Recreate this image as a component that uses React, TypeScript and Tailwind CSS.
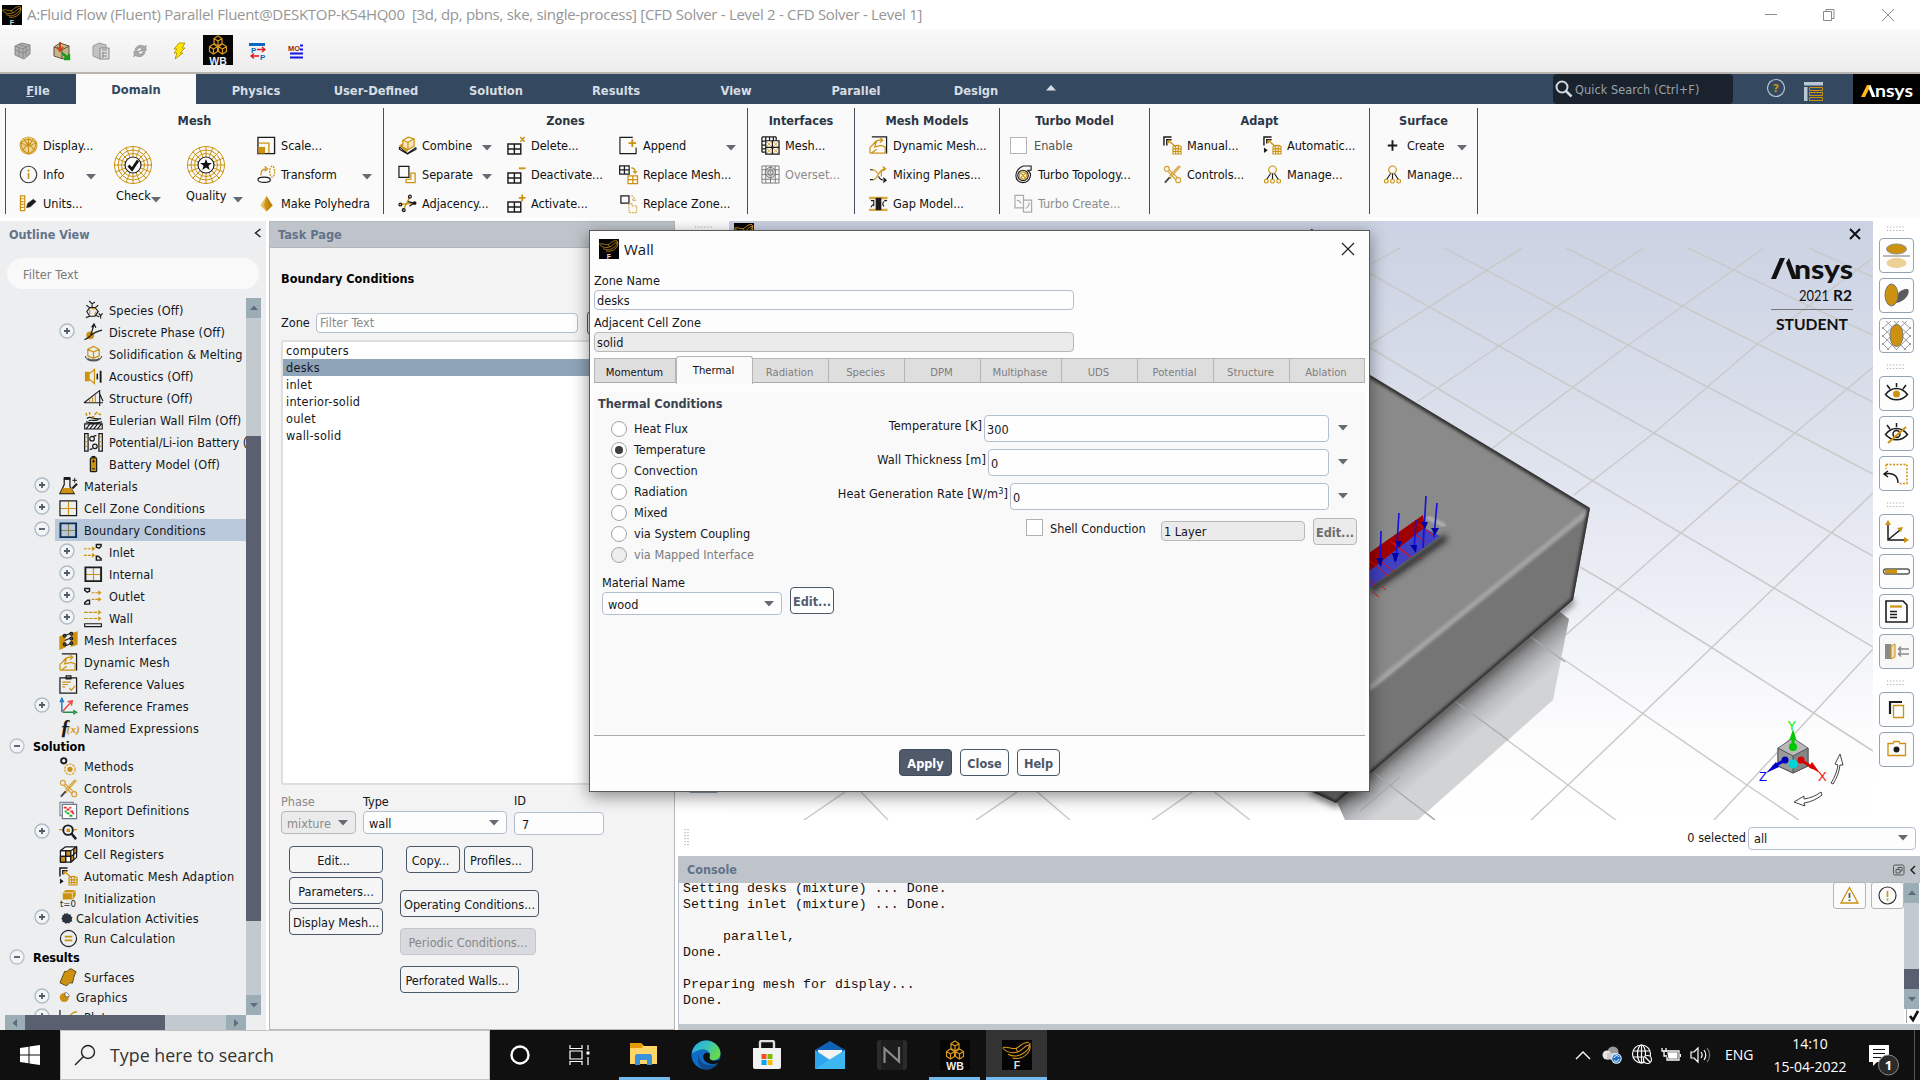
import React from "react";

const G = "#cc920f";
const K = "#1b1b1b";

const icons: Record<string, React.ReactNode> = {
  display: (
    <g fill="none" stroke={G} strokeWidth="1.1">
      <circle cx="10" cy="10" r="9" fill="#ecd39a" stroke="#d9a93f" />
      <path d="M1.5 7L10 3l8.500 4L16 15l-6 4-6-4zM10 3v16M4 15L10 7l6 8M1.500 7L10 11l8.500-4M5 3l5 8 5-8" stroke="#c98f12" />
    </g>
  ),
  info: (
    <g fill="none" stroke="#3a3a3a" strokeWidth="1.200">
      <circle cx="10" cy="10" r="8.700" />
      <path d="M10 8.500v6" stroke={G} strokeWidth="1.800" />
      <circle cx="10" cy="6" r=".6" fill={G} stroke={G} />
    </g>
  ),
  units: (
    <g fill="none" strokeWidth="1.300">
      <path d="M1.500 2h4.500v15.500H1.500zM2 5h3M2 8h3M2 11h3M2 14h3" stroke={G} />
      <path d="M8 14.500l1-4.500 6-4.500 3 2.500-6 5.500z" fill={K} stroke={K} strokeWidth=".5" />
    </g>
  ),
  scale: (
    <g fill="none" strokeWidth="1.400">
      <path d="M1 1.500h17.500v17H1z" stroke={K} />
      <path d="M1.500 7.500h11V18" stroke={G} />
      <path d="M1.500 11.500h7v7h-7z" fill={G} />
    </g>
  ),
  transform: (
    <g fill="none" strokeWidth="1.300">
      <ellipse cx="7.500" cy="15.500" rx="6.500" ry="2.800" stroke={K} />
      <path d="M4 11C4 6 6 4 9.500 4M8 1.500l3 2.500-3 2.500" stroke={G} />
      <ellipse cx="16" cy="7" rx="2.600" ry="5.800" stroke={G} strokeDasharray="2 1" />
    </g>
  ),
  poly: (
    <g>
      <path d="M10 2L3.500 12 10 18.500z" fill="#e6bd60" />
      <path d="M10 2l6.500 10L10 18.500z" fill="#b97f06" />
      <path d="M10 2L7.500 12 10 18.500 12.500 12z" fill={G} />
    </g>
  ),
  combine: (
    <g fill="none" strokeWidth="1.200" strokeLinejoin="round">
      <path d="M1.500 11.500L10 18.500l9-6.500M1.500 11.500V14l8.500 5 9-5v-2" stroke={K} />
      <path d="M5 4.500L11 1l6 2v7.500l-6.500 4L5 11.500zM5 4.500l5.500 2 6.500-3.500M10.500 6.500v8" fill="#f7e5bd" stroke={G} />
      <path d="M1 10l4-2v4l5.500 3-1 2z" fill={G} />
    </g>
  ),
  separate: (
    <g fill="none" strokeWidth="1.300">
      <path d="M1 1.500h10.500v11.500H1z" stroke={K} />
      <path d="M13.500 8.500h4.500v10H8.500v-3.500h5z" stroke={G} />
    </g>
  ),
  adjacency: (
    <g fill="none" strokeWidth="1.300">
      <path d="M2.500 11L17 9.500M12.500 3L5 18M4 11l10-1" stroke={G} />
      <path d="M10.500 8L17 9.500l-5 3.500" stroke={K} />
      <circle cx="12.500" cy="2.800" r="1.500" stroke={K} />
      <circle cx="2.500" cy="11" r="1.500" stroke={K} />
      <circle cx="6" cy="17" r="1.500" stroke={K} />
      <circle cx="17.500" cy="9.500" r="2" fill={K} />
    </g>
  ),
  del: (
    <g fill="none" strokeWidth="1.500">
      <path d="M1 8.500h13.500v10.500H1zM7.750 8.500V19M1 13.750h13.500" stroke={K} />
      <path d="M14 1l4.500 5M18.500 1L14 6" stroke={G} />
    </g>
  ),
  deact: (
    <g fill="none" strokeWidth="1.500">
      <path d="M1 8.500h13.500v10.500H1zM7.750 8.500V19M1 13.750h13.500" stroke={K} />
      <path d="M12.500 3.500h7" stroke={G} strokeWidth="2" />
    </g>
  ),
  act: (
    <g fill="none" strokeWidth="1.500">
      <path d="M1 8.500h13.500v10.500H1zM7.750 8.500V19M1 13.750h13.500" stroke={K} />
      <path d="M12.500 4h7M16 .5v7" stroke={G} strokeWidth="1.800" />
    </g>
  ),
  append: (
    <g fill="none" strokeWidth="1.200">
      <path d="M14.500 1.500H1v17h17V12" stroke={K} />
      <path d="M10 7.500h8M14 3.500v8" stroke={G} strokeWidth="2" />
    </g>
  ),
  repmesh: (
    <g fill="none" strokeWidth="1.300">
      <path d="M.7 1h10v8.500H.7zM5.700 1v8.500M.7 5.200h10" stroke={K} />
      <path d="M9.500 11.500h10v8h-10zM14.500 11.500v8M9.500 15.500h10M13 3c3 0 4 1.500 4 5M15 6.500l2 2 2-2" stroke={G} />
    </g>
  ),
  repzone: (
    <g fill="none" strokeWidth="1.300">
      <path d="M2 2h8.500v7.500H2z" stroke={K} />
      <path d="M10.500 9.500h3v3h5v7h-8zM13 2c2 0 3 1.500 3 5M14 5.500l2 2 2-2" stroke="#d9ad4b" strokeDasharray="2 1" />
    </g>
  ),
  imesh: (
    <g fill="none" strokeWidth="1.300">
      <path d="M1 1h15M1 1v16M1 5.500h4M1 9.500h4M1 13.500h4M1 17h4M5 1v4M9 1v4M13 1v4M16 1v4" stroke={K} />
      <path d="M5 5l14 14M19 5L5 19M12 5l7 7-7 7-7-7z" stroke="#dba93c" strokeWidth="1" />
      <path d="M5 5h14v14H5zM12 5v14M5 12h14" stroke={K} />
    </g>
  ),
  overset: (
    <g fill="none" stroke="#777" strokeWidth="1">
      <path d="M1 1h18v18H1zM5 1v18M10 1v18M15 1v18M1 5h18M1 10h18M1 15h18" />
      <circle cx="10" cy="8" r="5.500" fill="#bbb" fillOpacity=".7" />
      <circle cx="10" cy="8" r="2.800" />
    </g>
  ),
  dynmesh: (
    <g fill="none" strokeWidth="1.300">
      <path d="M3 1h15.500v17.500" stroke={K} />
      <path d="M1 12L8 5.500l-2 6 7-1.500 4 1.500v6.500H2.500L8 14M4 9.500C6 5 9 4 14 4.500M11.500 2l3 2.500-3 2.500M1 12v6" stroke={G} />
    </g>
  ),
  mixing: (
    <g fill="none" strokeWidth="1.300">
      <path d="M1 5h3.500M1 15.500h3.500M10 12c1 3 3 4 7 4M15 13.500l3 2.500-3 2.500" stroke={K} />
      <path d="M3 5c4 0 5 2 6 4M4.500 15.500c5 0 5-11 12-11.500M14.500 1.500l3 2.500-3 2.500M13 6v6" stroke={G} />
    </g>
  ),
  gap: (
    <g>
      <path d="M0 3h19.500v2.500H0zM0 15.500h19.500V18H0z" fill="#d9a93f" />
      <path d="M7 4h6v13H7z" fill={K} />
      <path d="M2 7h3v6M16 7h3M16 13c-2-1-2-4 0-5M4 11l-2 3" fill="none" stroke={K} strokeWidth="1.200" />
    </g>
  ),
  turbo: (
    <g fill="none" stroke={K} strokeWidth="1.200">
      <path d="M18 1v4.500h-4c3 1.500 4 4 3 7-1 4-4 6-8 6-4 0-7-3-7-7.500C2 6 6 2 10 1z" />
      <circle cx="9.500" cy="11" r="5.500" />
      <circle cx="9.500" cy="11" r="3.800" stroke={G} />
      <path d="M7 8.500l5 5M12 8.500l-5 5" stroke={G} />
    </g>
  ),
  turboc: (
    <g fill="none" stroke="#aaa" strokeWidth="1.300">
      <path d="M1 1.500h9v13H1zM10 6.500h8.500v12.500H10V6.500M3 7c2-1 3 0 4.500 3M12 15c2 0 4-3 4-6" />
    </g>
  ),
  adapt: (
    <g fill="none" strokeWidth="1.500">
      <path d="M9 1H1v9M9 4H4v6" stroke={K} />
      <path d="M6 5l7 6M7.500 4.500L5.500 5l0 2.500" stroke={G} />
      <path d="M10.500 11.500c2-2 5-2 8.500-.5v8h-8.500zM13.300 10v9M16 10v9M10.500 13.500H19M10.500 16.300H19" stroke={G} strokeWidth="1.200" />
    </g>
  ),
  adaptauto: (
    <g fill="none" strokeWidth="1.500">
      <path d="M9 1H1v9M9 4H4v4" stroke={K} />
      <path d="M1 12l4 3-4 3z" fill={K} />
      <path d="M6 5l7 6M7.500 4.500L5.500 5l0 2.500" stroke={G} />
      <path d="M10.500 11.500c2-2 5-2 8.500-.5v8h-8.500zM13.300 10v9M16 10v9M10.500 13.500H19M10.500 16.300H19" stroke={G} strokeWidth="1.200" />
    </g>
  ),
  controls: (
    <g fill="none" strokeWidth="1.300" stroke="#d6a336">
      <circle cx="4" cy="4" r="2.600" />
      <circle cx="16" cy="16" r="2.600" />
      <path d="M5.500 7l8 8.500M7 5.500l8.500 8M18.500 1.500L8 13M17 .8L7 11.500M6.500 12.500l2 2" />
      <path d="M7 13l-5 5.500" stroke="#444" strokeWidth="2" />
    </g>
  ),
  manage: (
    <g fill="none" strokeWidth="1.200" stroke={G}>
      <circle cx="10" cy="5" r="4" />
      <path d="M8 9L4 15M10 9v6M12 9l4 6" stroke={K} />
      <circle cx="3.500" cy="17" r="2" />
      <circle cx="10" cy="17" r="2" />
      <circle cx="16.500" cy="17" r="2" />
    </g>
  ),
  plus: <path d="M10 4.500v11M5 10h10" stroke={K} strokeWidth="2" />,
  species: (
    <g fill="none" strokeWidth="1.200" stroke={K}>
      <path d="M6 7h5.500l3.500 4-3.500 5H6l-3-5zM6 7L2.500 4.500M8.500 7V3M5.500 0L8.500 3l3-2M12 7l3-2.500M6 16l-4 1.500M12 15l4 1.500M15.500 13l2 2.500 2-2.500M17.500 15v3.500" />
      <path d="M6 9v5M8 8h4M11 14l2-3" stroke={G} />
    </g>
  ),
  discrete: (
    <g fill="none" strokeWidth="1.300" stroke={K}>
      <circle cx="6.500" cy="13" r="3.500" fill={G} stroke={G} />
      <path d="M.5 17.500C6 16 7 10 19 7.500M7 13l3.500-11M8 4.500L10.500 1l2 4" />
    </g>
  ),
  solid: (
    <g fill="none" strokeWidth="1.300">
      <path d="M4 4.500L10 1.500l6 3v7L10 14l-6-2.500zM4 4.500l6 3 6-3M10 7.500V14" stroke={G} />
      <path d="M1.500 11.500c0 7 17 7 17 0M4 13.500c1 3 11 3 12 0" stroke="#555" />
    </g>
  ),
  acoustic: (
    <g fill="none" strokeWidth="1.300">
      <path d="M1 5h5v10H1z" fill={G} />
      <path d="M6 7l5-4.500v15L6 13" stroke={G} />
      <path d="M14 7v6" stroke={K} strokeWidth="1.600" />
      <path d="M17.500 4v12.500" stroke={K} strokeWidth="2" />
    </g>
  ),
  structure: (
    <g fill="none" strokeWidth="1.200" stroke={K}>
      <path d="M0 14.500L16 2M0 14.500h20M16.500 1v17M16 4l4 9" />
      <path d="M6 11v3M9 9v5M12 6v8" stroke={G} />
    </g>
  ),
  film: (
    <g fill="none" strokeWidth="1.200" stroke={K}>
      <path d="M.7 13.500h18.500v5.500H.7zM2 19l4-5M6 19l4-5M10 19l4-5M14 19l4-5M2 11.500c5 1 13 1 17 0M3 8c4-4 6 2 15 0M5 10c4-1 8 1 10-1" />
      <path d="M2 2l1 3M6 1v3M11 4l3-3M15 3l3 1M8 6h3" stroke={G} strokeWidth="1.600" />
    </g>
  ),
  potential: (
    <g fill="none" strokeWidth="1.300" stroke={K}>
      <path d="M.7.700h3.600v18.500H.7zM15.700.700h3.600v18.500h-3.600z" />
      <path d="M1.500 4h2M1.500 9h2M1.500 14h2M16.500 4h2M16.500 9h2M16.500 14h2" stroke={G} />
      <circle cx="8.500" cy="6" r="2.400" />
      <circle cx="11.500" cy="14" r="2.400" />
      <path d="M10 3.500l3-1M9 16.500l-3 1" />
    </g>
  ),
  battery: (
    <g>
      <path d="M8 1h4v2H8z" fill={K} />
      <rect x="6.700" y="3" width="6.600" height="14.500" rx="1" fill={G} stroke={K} strokeWidth="1.300" />
      <path d="M8.500 6.500h3M10 5v3M8.500 14.500h3" stroke={K} strokeWidth="1" />
    </g>
  ),
  materials: (
    <g fill="none" strokeWidth="1.300" stroke={K}>
      <path d="M5.500 2v6L1 17.500h15L11.500 10V2z" fill="#eee" />
      <path d="M4 11.500h9l2.500 5.500h-14z" fill={G} stroke="none" />
      <path d="M5 1.500h7" strokeWidth="3" />
      <path d="M14 3.500h5M16.500 1v5" strokeWidth="1" />
      <path d="M19 7l-5 5" strokeWidth="2.200" />
    </g>
  ),
  cell: (
    <g fill="none" strokeWidth="1.200">
      <path d="M10 2.500v15M1.500 10h17" stroke={G} />
      <path d="M1 2h17.500v15.500H1z" stroke={K} strokeWidth="1.300" />
    </g>
  ),
  boundary: (
    <g fill="none" strokeWidth="1.200">
      <path d="M10 2.500v15M1.500 10h17" stroke="#8a8a50" />
      <path d="M1.500 2.500h16.500v14.500H1.500z" stroke="#0d2f55" strokeWidth="2" />
    </g>
  ),
  internal: (
    <g fill="none" strokeWidth="1.200">
      <path d="M10 3v14M2 10h16" stroke={G} />
      <path d="M1.500 2.500h16.500v14.500H1.500z" stroke={K} strokeWidth="2" />
    </g>
  ),
  inlet: (
    <g fill="none" strokeWidth="1.200">
      <path d="M0 6h9M0 13h9" stroke={G} strokeDasharray="3 1" />
      <path d="M8.500 3.500L12 6 8.500 8.500zM8.500 10.500L12 13l-3.500 2.500z" fill={G} />
      <path d="M18 1.500h-5v3l3 1 2-2zM13 18v-4h2l3 2.500V18z" stroke={K} strokeWidth="1.500" />
    </g>
  ),
  outlet: (
    <g fill="none" strokeWidth="1.200">
      <path d="M8 6h8M8 13h8" stroke={G} strokeDasharray="3 1" />
      <path d="M15 3.500L18.500 6 15 8.500zM15 10.500l3.500 2.500-3.500 2.500z" fill={G} />
      <path d="M.8 1.500h5v3l-2.500 1-2.500-2zM5.800 18v-4h-2l-3 2.500V18z" stroke={K} strokeWidth="1.500" />
    </g>
  ),
  wall: (
    <g fill="none" strokeWidth="1.200">
      <path d="M0 3.500h15M0 10h15" stroke={G} strokeDasharray="4 1" />
      <path d="M15 1L18.500 3.500 15 6zM15 7.500L18.500 10 15 12.500z" fill={G} />
      <path d="M.7 15.500h17.600v3H.7z" stroke={K} />
    </g>
  ),
  minterf: (
    <g strokeWidth="1.200" stroke={K}>
      <path d="M1 6l5-2v13l-5 2zM13 3l6-2v13l-6 2z" fill={G} stroke={G} />
      <path d="M6 5l7-3M6 16l7-3M6 10l7-3" fill="none" />
      <circle cx="6" cy="5" r="1.500" fill="#555" />
      <circle cx="6" cy="14" r="1.500" fill="#555" />
      <circle cx="13" cy="3" r="1.500" fill="#555" />
      <circle cx="13" cy="13" r="1.500" fill="#555" />
      <circle cx="13" cy="8" r="1.500" fill="#555" />
    </g>
  ),
  refval: (
    <g fill="none" strokeWidth="1.300" stroke={K}>
      <path d="M1 3h17.500v16H1zM7.500 1h5v3h-5z" />
      <path d="M3.500 7.500h9M3.500 10h6M3.500 12.500h3M11 14l2 2 4-4.500" stroke={G} />
    </g>
  ),
  frames: (
    <g fill="none" strokeWidth="1.500">
      <path d="M3 16V4M1 5.500L3 1.500l2 4" stroke="#1976c5" />
      <path d="M4 16h12M15 14l3.500 2-3.500 2" stroke="#1b9146" />
      <path d="M4 15l9-10M9 5l5-1-1 5" stroke="#e8493c" />
    </g>
  ),
  methods: (
    <g fill="none">
      <circle cx="5" cy="4" r="2.800" stroke={K} strokeWidth="2" />
      <circle cx="11.500" cy="13" r="5.500" stroke="#dcae49" strokeWidth="1.600" strokeDasharray="2.500 1" />
      <circle cx="11.500" cy="13" r="2.800" fill={G} />
    </g>
  ),
  report: (
    <g fill="none" strokeWidth="1.200">
      <path d="M1 1.500h14v14H1z" stroke="#7d8894" />
      <path d="M3.500 3.500h15v15h-15z" fill="#fff" stroke="#6b7784" />
      <path d="M5 7h3M8 9h3M11 7h2M12 11h3M14 13h2" stroke="#e22" strokeWidth="2" />
      <path d="M6 11h2M8 13h3M11 15.500h3" stroke="#1a1" strokeWidth="2" />
    </g>
  ),
  monitors: (
    <g fill="none">
      <path d="M0 7h4M15 7h4" stroke={G} strokeWidth="1.300" />
      <circle cx="9.500" cy="7.500" r="5" stroke={K} strokeWidth="2" />
      <path d="M8 6h3.500v3.500H8z" fill={G} />
      <path d="M13 11l5 6" stroke={K} strokeWidth="2.600" />
    </g>
  ),
  registers: (
    <g strokeWidth="1.300" stroke={K} strokeLinejoin="round">
      <path d="M1.500 6h11v12h-11z" fill="#fff" />
      <path d="M7 6h5.500v6H7zM1.500 12H7v6H1.500z" fill={G} />
      <path d="M1.500 6l5-4h12l-6 4zM12.500 6l6-4v11l-6 5z" fill="#fff" />
      <path d="M15.500 4l3-2v5.500l-3 2.500zM12.500 12l3-2v5.500l-3 2.500z" fill={G} />
      <path d="M7 6v12M1.500 12h11" fill="none" />
    </g>
  ),
  init: (
    <g>
      <path d="M4 4l3-3h10.500v6l-3 4H4z" fill={G} />
      <path d="M4 4h10v6M14 4l3.500-3" stroke="#f3dfb0" fill="none" />
      <text x="1" y="19" fontSize="9" fontFamily="DejaVu Sans" fill={K}>t=0</text>
    </g>
  ),
  calc: <path d="M7 3l2 1 2-1.500 2 2 2.500 0 .5 2.500 2 1.500-1 2.500 .5 2.500-2.500 1-1.500 2-2.500-.5-2.500 1-1.500-2-2.500-.5 0-2.500L3 10l1.500-2L4.500 5.500 6.500 5z" fill="#2b333e" />,
  run: (
    <g fill="none">
      <circle cx="10" cy="10" r="8.500" stroke={K} strokeWidth="1.200" />
      <path d="M6 8h8M6 12h8" stroke={G} strokeWidth="1.800" />
    </g>
  ),
  surfaces: <path d="M1 15.500L6 3.500C10 5 9 .5 13 1l5 3c-3 5-2 7-4 12-4-2-4 3-7 2.500z" fill={G} stroke="#5d4715" strokeWidth="1" />,
  graphics: (
    <g>
      <circle cx="7" cy="10" r="6" fill={G} />
      <path d="M8 3.500h2l3.500 3.500V9H8z" fill="#fff" stroke="#555" />
    </g>
  ),
  plots: (
    <g fill="none">
      <path d="M1 2v17h18" stroke={K} strokeWidth="1.300" />
      <path d="M9 15c2 0 0-11 10-11" stroke={G} strokeWidth="1.300" />
    </g>
  ),
};

const Ic = ({ n, s = 20 }: { n: string; s?: number }) => (
  <svg width={s} height={s} viewBox="0 0 20 20" className="shrink-0 overflow-visible">
    {n === "named" ? (
      <g fontFamily="Liberation Serif" fontStyle="italic">
        <text x="1" y="16" fontSize="22" fontWeight="bold" fill={K}>ƒ</text>
        <text x="8" y="15" fontSize="12" fontWeight="bold" fill={G}>(x)</text>
      </g>
    ) : (
      icons[n]
    )}
  </svg>
);

const Down = ({ className = "", color = "#666b73" }: { className?: string; color?: string }) => (
  <svg width="10" height="6" viewBox="0 0 10 6" className={"shrink-0 " + className}>
    <path d="M0 0h10L5 5.500z" fill={color} />
  </svg>
);

const fluentStrokes = "M.5 5C4 4 7 6.500 9.500 5.500S13 1.500 18 1.500M.5 5.500C4 9 7 9 10.500 8s3.500-4 8-5M4 9.500c4 2 7 1.500 10-.5s4-3 4.500-6M7 12c4 1 8-.5 10-3s2-4 1.500-7M9.500 5.500c0 2 1.500 2.500 1 2.500";

const FluentLogo = ({ size, h }: { size: number; h?: number }) => (
  <svg width={size} height={h ?? size} viewBox="0 0 20 20" preserveAspectRatio="none" className="shrink-0">
    <rect width="20" height="20" fill="#050505" />
    <path d={fluentStrokes} stroke="#d9981c" strokeWidth=".7" fill="none" />
    <text x="10" y="19.500" fontSize="7" fontWeight="bold" fontFamily="Liberation Sans" fill="#ddd" textAnchor="middle">F</text>
  </svg>
);

const WbLogo = ({ w }: { w: number }) => (
  <svg width={w} height="30" viewBox="0 0 30 30" preserveAspectRatio="none" className="shrink-0">
    <rect width="30" height="30" fill="#050505" />
    <g fill="none" stroke="#d9981c" strokeWidth="1.200">
      <path d="M15 1l4 2.500v5L15 11l-4-2.500v-5zM15 6l4-2.500M15 6l-4-2.500M15 6v5" />
      <path d="M10.500 9l4 2.500v5l-4 2.500-4-2.500v-5zM10.500 14l4-2.500M10.500 14l-4-2.500M10.500 14v5" />
      <path d="M19.500 9l4 2.500v5l-4 2.500-4-2.500v-5zM19.500 14l4-2.500M19.500 14l-4-2.500M19.500 14v5" />
    </g>
    <text x="15" y="29.500" fontSize="10.500" fontWeight="bold" fontFamily="Liberation Sans" fill="#eee" textAnchor="middle">WB</text>
  </svg>
);

const R = ({ n, t, arrow, dim }: { n: string; t: string; arrow?: boolean; dim?: boolean }) => (
  <div className={"flex h-[29px] items-center whitespace-nowrap tracking-[-0.040px] " + (dim ? "text-[#8b8b8b]" : "text-[#111]")}>
    <span className="w-[24px] shrink-0"><Ic n={n} s={19} /></span>
    <span>{t}</span>
    {arrow && <Down className="ml-auto mt-[5px]" />}
  </div>
);

const Group = ({ title, w, children }: { title: string; w: string; children: React.ReactNode }) => (
  <section className={"h-[106px] shrink-0 border-r border-[#454e5c] " + w}>
    <h3 className="h-[23px] pt-[5px] text-center font-bold text-[#2c3644]">{title}</h3>
    <div className="flex">{children}</div>
  </section>
);

const BigMesh = ({ kind, label, cls }: { kind: "check" | "star"; label: string; cls: string }) => (
  <div className={"flex flex-col pt-[15px] " + cls}>
    <svg width="38" height="38" viewBox="0 0 38 38" className="self-center">
      <g fill="none" stroke={G} strokeWidth="1">
        <circle cx="19" cy="19" r="18.500" />
        <circle cx="19" cy="19" r="15" />
        <circle cx="19" cy="19" r="11.500" />
        <path d="M19 0v38M0 19h38M5.600 5.600l26.800 26.800M32.400 5.600L5.600 32.400M12 1.500l14 35M26 1.500l-14 35M1.500 12l35 14M1.500 26l35-14" />
      </g>
      <circle cx="19" cy="19" r="8" fill="#fff" stroke="#222" strokeWidth="1.200" />
      {kind === "check" ? (
        <path d="M14.500 19.500l3.500 4 6-9" stroke="#111" strokeWidth="2.800" fill="none" />
      ) : (
        <path d="M19 13l1.600 4h4.200l-3.300 2.700 1.200 4.200L19 21.500l-3.700 2.400 1.200-4.200L13.200 17h4.200z" fill="#111" />
      )}
    </svg>
    <div className={"mt-[4px] flex items-center whitespace-nowrap text-[#111] " + (kind === "check" ? "pl-[11px]" : "pl-[8px]")}>{label}<Down className={kind === "check" ? "mt-[7px]" : "ml-[7px] mt-[7px]"} /></div>
  </div>
);

type Row = { l: number; n?: string; t: string; e?: "+" | "-"; h?: number; sel?: boolean };
const tree: Row[] = [
  { l: 2, n: "species", t: "Species (Off)" },
  { l: 2, n: "discrete", t: "Discrete Phase (Off)", e: "+" },
  { l: 2, n: "solid", t: "Solidification & Melting" },
  { l: 2, n: "acoustic", t: "Acoustics (Off)" },
  { l: 2, n: "structure", t: "Structure (Off)" },
  { l: 2, n: "film", t: "Eulerian Wall Film (Off)" },
  { l: 2, n: "potential", t: "Potential/Li-ion Battery (Off)" },
  { l: 2, n: "battery", t: "Battery Model (Off)" },
  { l: 1, n: "materials", t: "Materials", e: "+" },
  { l: 1, n: "cell", t: "Cell Zone Conditions", e: "+" },
  { l: 1, n: "boundary", t: "Boundary Conditions", e: "-", sel: true },
  { l: 2, n: "inlet", t: "Inlet", e: "+" },
  { l: 2, n: "internal", t: "Internal", e: "+" },
  { l: 2, n: "outlet", t: "Outlet", e: "+" },
  { l: 2, n: "wall", t: "Wall", e: "+" },
  { l: 1, n: "minterf", t: "Mesh Interfaces" },
  { l: 1, n: "dynmesh", t: "Dynamic Mesh" },
  { l: 1, n: "refval", t: "Reference Values" },
  { l: 1, n: "frames", t: "Reference Frames", e: "+" },
  { l: 1, n: "named", t: "Named Expressions" },
  { l: 0, t: "Solution", e: "-", h: 16 },
  { l: 1, n: "methods", t: "Methods" },
  { l: 1, n: "controls", t: "Controls" },
  { l: 1, n: "report", t: "Report Definitions" },
  { l: 1, n: "monitors", t: "Monitors", e: "+" },
  { l: 1, n: "registers", t: "Cell Registers" },
  { l: 1, n: "adaptauto", t: "Automatic Mesh Adaption" },
  { l: 1, n: "init", t: "Initialization" },
  { l: 1, n: "calc", t: "Calculation Activities", e: "+", h: 18 },
  { l: 1, n: "run", t: "Run Calculation" },
  { l: 0, t: "Results", e: "-", h: 17 },
  { l: 1, n: "surfaces", t: "Surfaces" },
  { l: 1, n: "graphics", t: "Graphics", e: "+", h: 18 },
  { l: 1, n: "plots", t: "Plots", e: "+" },
];
const pad = ["pl-[9px]", "pl-[34px]", "pl-[59px]"];

const TreeRow = ({ r }: { r: Row }) => (
  <div className={"flex shrink-0 items-center whitespace-nowrap " + pad[r.l]} style={{ height: r.h ?? 22 }}>
    <span className="flex w-[21px] shrink-0 items-center">
      {r.e && (
        <svg width="16" height="16" viewBox="0 0 16 16" className="-mt-[2px]">
          <circle cx="8" cy="8" r="7" fill="#f2f4f5" stroke={r.l === 0 ? "#bcc0cf" : "#afbcc5"} strokeWidth="1.400" />
          <path d={r.e === "+" ? "M5 8h6M8 5v6" : "M5 8h6"} stroke="#515b6c" strokeWidth="1.800" />
        </svg>
      )}
    </span>
    {r.l === 0 ? (
      <span className="pl-[3px] font-bold tracking-[-0.100px] text-black">{r.t}</span>
    ) : (
      <span className={"flex h-full flex-1 items-center pl-[4px] text-[#14171c] " + (r.sel ? "bg-[#b9c8da]" : "")}>
        <span className={r.h === 18 ? "w-[17px] shrink-0" : "w-[25px] shrink-0"}><Ic n={r.n!} s={r.h === 18 ? 15 : 19} /></span>
        <span className={"pt-[2px] " + (r.n === "potential" ? "tracking-[0.020px]" : r.l === 2 ? "tracking-[0.120px]" : "tracking-[0.200px]")}>{r.t}</span>
      </span>
    )}
  </div>
);

const Btn = ({ t, c, bold }: { t: string; c: string; bold?: boolean }) => (
  <div className={"flex h-[27px] shrink-0 items-center justify-center whitespace-nowrap rounded-[4px] border pt-[2px] " + (bold ? "font-bold " : "") + c}>{t}</div>
);
const normal = "border-[#4b586a] bg-[#f5f5f5] text-[#14171c]";

const Tool = ({ children, gray }: { children: React.ReactNode; gray?: boolean }) => (
  <div className={"flex h-[35px] w-[35px] shrink-0 items-center justify-center rounded-[4px] border border-[#94a3b3] " + (gray ? "bg-[#f8f8f8]" : "bg-[#fdfdfd]")}>
    <svg width="29" height="29" viewBox="0 0 29 29" fill="none">{children}</svg>
  </div>
);
const Dots = ({ c }: { c: string }) => (
  <svg width="18" height="6" viewBox="0 0 18 6" className={"shrink-0 " + c}>
    <path d="M0 1h18M0 4.500h18" stroke="#aaa" strokeWidth="1.200" strokeDasharray="1.200 1.900" />
  </svg>
);

const gridLines = [
  "M1400 248L1369 265", "M1522 248L1369 345", "M1643 248L1499 346L1417 402", "M1764 248L1627 346L1490 450",
  "M1873 258L1755 346L1654 433L1574 495", "M1873 367L1795 433L1681 533L1560 640", "M1873 493L1774 588L1568 785L1531 820",
  "M1873 649L1747 785L1714 820", "M1369 273L1499 346L1654 433L1739 481L1873 556", "M1369 347L1437 388L1593 481L1774 588L1873 647",
  "M1444 248L1556 307L1795 433L1873 474", "M1566 248L1684 307L1790 360L1873 402", "M1688 248L1811 307L1873 335",
  "M1809 248L1873 277", "M1580 567L1616 588L1711 647L1873 751", "M1531 637L1642 713L1747 785L1799 820",
  "M1456 702L1568 785L1616 820", "M1374 773L1435 820", "M804 820L845 792", "M888 820L861 792", "M976 820L1020 790", "M1070 820L1035 790",
  "M1152 820L1195 790", "M1250 820L1212 790",
];

const FluentMini = () => (
  <g><rect x="734" y="223" width="20" height="20" fill="#050505" /><path transform="translate(734 223)" d={fluentStrokes} stroke="#d9981c" fill="none" /></g>
);

const Viewport = () => (
  <svg width="1144" height="599" viewBox="729 221 1144 599" className="block shrink-0">
    <defs>
      <linearGradient id="sky" x1="0" y1="0" x2="0" y2="1">
        <stop offset="0" stopColor="#cbd2e3" /><stop offset=".3" stopColor="#d9deea" />
        <stop offset=".65" stopColor="#eef0f7" /><stop offset=".85" stopColor="#fcfcfd" /><stop offset="1" stopColor="#fff" />
      </linearGradient>
      <linearGradient id="refl" gradientUnits="userSpaceOnUse" x1="1462" y1="695" x2="1487" y2="725">
        <stop offset="0" stopColor="#777" /><stop offset=".6" stopColor="#b9bbbf" /><stop offset="1" stopColor="#d2d3d5" />
      </linearGradient>
      <filter id="soft" x="-20%" y="-20%" width="140%" height="140%"><feGaussianBlur stdDeviation="3" /></filter>
      <filter id="soft1"><feGaussianBlur stdDeviation="1.500" /></filter>
      <clipPath id="boxclip"><path d="M1200 272L1370 375L1590 508L1573 600L1336 803L1200 740z" /></clipPath>
    </defs>
    <rect x="729" y="221" width="1144" height="599" fill="url(#sky)" />
    <g stroke="#c9cac9" strokeWidth="1.500" fill="none">{gridLines.map((d) => <path key={d} d={d} />)}</g>
    <path d="M1559 611L1569 619L1553 700L1418 820H1345L1336 800z" fill="url(#refl)" />
    <g stroke="#a9aaaa" strokeWidth="1.300" fill="none"><path d="M1531 637L1565 662M1456 702L1508 740M1374 773L1435 820M1400 777L1360 811" /></g>
    <path d="M1573 600L1336 803L1310 790" stroke="#555" strokeWidth="8" filter="url(#soft)" opacity=".7" fill="none" />
    <path d="M1200 272L1370 375L1590 508L1370 690L1200 780z" fill="#8a8a8a" />
    <path d="M1590 508L1573 600L1336 803L1300 785L1300 748L1370 690z" fill="#757575" />
    <g clipPath="url(#boxclip)">
      <path d="M1360 369L1590 508" stroke="#333" strokeWidth="6" filter="url(#soft1)" />
      <path d="M1370 688L1588 512" stroke="#a6a6a6" strokeWidth="5" filter="url(#soft1)" />
      <path d="M1590 508L1573 600L1336 803L1300 786" stroke="#2d2d2d" strokeWidth="5" fill="none" filter="url(#soft1)" />
      <path d="M1370 590L1400 570L1446 537" stroke="#222" strokeWidth="6" filter="url(#soft)" fill="none" />
    </g>
    <path d="M1369 553L1423 515L1426 532L1369 577z" fill="#a00000" />
    <path d="M1369 571L1424 528L1440 536L1369 588z" fill="#4040c0" />
    <path d="M1427 517l18 9" stroke="#b5b5b5" strokeWidth="4" filter="url(#soft1)" />
    <path d="M1370 561l20 16M1376 557l18 15M1394 543l17 14M1390 541l20 16M1418 524l18 13M1414 533l12 10M1369 580l6 5M1373 592l6 5M1382 586l4 4M1419 557l3 3" stroke="#e01010" strokeWidth="1" />
    <path d="M1426 496l-3 52M1437 503l-3 34M1399 513l-3 48M1416 520l-2 30M1381 531l-1 34" stroke="#1010e0" strokeWidth="1.600" />
    <path d="M1421 522h7l-3 7zM1431 528h8l-4 7zM1395 541h7l-3 7zM1410 545h7l-1 8zM1392 553h7l-4 10zM1376 558h7l-2 9z" fill="#0000a8" />
    <g transform="translate(1793 748)">
      <path d="M0-10L15 0V18L0 25-15 18V0z" fill="#b9b9b9" stroke="#666" />
      <path d="M0 8L15 0V18L0 25z" fill="#858585" stroke="#555" /><path d="M0 8L-15 0V18L0 25z" fill="#9a9a9a" stroke="#555" />
      <path d="M0 0v-12" stroke="#0c0" strokeWidth="3" /><path d="M-3.500-8L0-19 3.500-8z" fill="#00c800" />
      <path d="M-8 12L-20 19" stroke="#00d" strokeWidth="3" /><path d="M-17 14l3 5-13 6z" fill="#0000c8" />
      <path d="M8 12L20 20" stroke="#d00" strokeWidth="3" /><path d="M19 14l-3 5 11 6z" fill="#d80000" />
      <circle cx="0" cy="-1" r="4" fill="#00c800" /><circle cx="-8" cy="12" r="3.500" fill="#0000b8" />
      <circle cx="8" cy="12" r="3.500" fill="#d80000" /><circle cx="0" cy="16" r="4.500" fill="#00d5d5" />
      <g fontFamily="Liberation Sans" fontSize="13">
        <text x="-5.500" y="-18" fill="#0e0">Y</text><text x="-34" y="33" fill="#00f">Z</text><text x="25" y="33" fill="#f00">X</text>
      </g>
      <path d="M38 35c4-6 6-12 7-18l-3-1 5-10 3 11h-3c-1 7-3 13-7 19zM28 44c-5 4-11 6-17 7l0-3-10 6 11 4-1-3c7-1 13-4 18-8z" fill="#fff" stroke="#444" />
    </g>
    <FluentMini />
    <g fontFamily="DejaVu Sans Condensed, DejaVu Sans" fontWeight="bold" fontSize="12.600" fill="#2c3644"><text x="1284" y="239">Mesh</text></g>
    <path d="M1850 229l10 10M1860 229l-10 10" stroke="#111" strokeWidth="2" />
    <path d="M1771 279L1780 258h5l-9 21zM1786 263l3-5 8 21h-5z" fill="#111" />
    <g fill="#111" fontFamily="Lato">
      <text x="1794" y="279" fontSize="26" fontWeight="900" textLength="59" lengthAdjust="spacingAndGlyphs">nsys</text>
      <text x="1799" y="301" fontSize="15" textLength="30" lengthAdjust="spacingAndGlyphs">2021</text>
      <text x="1833" y="301" fontSize="15" fontWeight="bold" textLength="19" lengthAdjust="spacingAndGlyphs">R2</text>
      <text x="1776" y="330" fontSize="15" fontWeight="bold" textLength="72" lengthAdjust="spacingAndGlyphs">STUDENT</text>
    </g>
    <path d="M1771 309.500h82" stroke="#777" />
  </svg>
);

const ScrollTri = ({ d }: { d: string }) => (
  <svg width="10" height="10" viewBox="0 0 10 10"><path d={d} fill="#5d6b7d" /></svg>
);

const dlgTabs: [string, string][] = [
  ["Radiation", "w-[76px]"], ["Species", "w-[76px]"], ["DPM", "w-[76px]"], ["Multiphase", "w-[81px]"], ["UDS", "w-[76px]"],
  ["Potential", "w-[76px]"], ["Structure", "w-[76px]"], ["Ablation", "w-[75px]"],
];

const Field = ({ label, w, v, top }: { label: React.ReactNode; w: string; v: string; top: string }) => (
  <div className={"flex justify-end " + top}>
    <span className="shrink-0 whitespace-nowrap pr-[2px] pt-[3px] tracking-[0.120px]">{label}</span>
    <div className={"flex h-[27px] shrink-0 items-center rounded-[4px] border border-[#b3bfcf] bg-[#fefefe] pl-[2px] pt-[3px] " + w}>{v}</div>
    <Down className="ml-[9px] mt-[10px]" />
  </div>
);

const Dialog = () => (
  <div className="absolute left-[589px] top-[230px] flex h-[562px] w-[781px] flex-col border border-[#5a5a5a] bg-[#fdfdfd] px-[4px] text-[#14171c] shadow-[0_4px_16px_rgba(0,0,0,0.45)]">
    <div className="flex h-[40px] shrink-0 items-center pb-[4px] pl-[5px] pr-[10px]">
      <FluentLogo size={20} />
      <span className="-mt-px ml-[5px] flex-1 text-[15px] [font-family:'Open_Sans',sans-serif]">Wall</span>
      <svg width="14" height="14" viewBox="0 0 14 14"><path d="M1 1l12 12M13 1L1 13" stroke="#222" strokeWidth="1.200" /></svg>
    </div>
    <div className="h-[19px] shrink-0 pt-[2px]">Zone Name</div>
    <div className="flex h-[20px] w-[480px] shrink-0 items-center rounded-[4px] border border-[#b3bfcf] bg-[#fefefe] pl-[2px] pt-px">desks</div>
    <div className="h-[22px] shrink-0 pt-[5px]">Adjacent Cell Zone</div>
    <div className="flex h-[20px] w-[480px] shrink-0 items-center rounded-[4px] border border-[#b8b8b8] bg-[#ebebeb] pl-[2px] pt-px">solid</div>
    <div className="mt-[4px] flex h-[28px] shrink-0 items-end text-[11.200px]">
      <div className="mb-px flex h-[25px] w-[82px] items-center justify-center border border-[#b5b5b5] border-b-[#aaa] bg-[#dedede] pr-px pt-[4px] text-[#111]">Momentum</div>
      <div className="flex h-[28px] w-[77px] items-center justify-center rounded-t-[3px] border border-b-0 border-[#b5b5b5] bg-[#fafafa] pr-[2px] pt-px text-[#111]">Thermal</div>
      {dlgTabs.map(([t, w]) => (
        <div key={t} className={"mb-px flex h-[25px] items-center justify-center border border-l-0 border-[#b5b5b5] border-b-[#aaa] bg-[#dedede] pr-[2px] pt-[4px] text-[#7f7f7f] " + w}>{t}</div>
      ))}
    </div>
    <div className="mt-[8px] flex h-[344px] shrink-0 border-b border-[#a9a9a9] bg-[#f9f9f9]">
      <div className="w-[238px] shrink-0">
        <div className="h-[26px] pl-[4px] pt-[4px] text-[12.600px] font-bold text-[#3b4350]">Thermal Conditions</div>
        {["Heat Flux", "Temperature", "Convection", "Radiation", "Mixed", "via System Coupling", "via Mapped Interface"].map((t, i) => (
          <div key={t} className={"flex h-[21px] items-center pl-[17px] " + (i === 6 ? "text-[#7c7c7c]" : "")}>
            <span className={"flex h-[16px] w-[16px] items-center justify-center rounded-full border border-[#a3a3a3] " + (i === 6 ? "bg-[#ededed]" : "bg-white")}>
              {i === 1 && <span className="h-[8px] w-[8px] rounded-full bg-[#3f3f3f]" />}
            </span>
            <span className="pl-[7px]">{t}</span>
          </div>
        ))}
        <div className="ml-[8px] mt-[10px] flex h-[40px]">
          <div className="w-[180px] shrink-0">
            <div className="h-[17px]">Material Name</div>
            <div className="flex h-[23px] items-center justify-between rounded-[4px] border border-[#b3bfcf] bg-[#fdfdfd] pl-[5px] pr-[7px]"><span className="pt-[3px]">wood</span><Down /></div>
          </div>
          <div className="ml-[8px] mt-[12px] shrink-0"><Btn t="Edit..." bold c="w-[44px] border-[#4b586a] bg-[#fdfdfd] text-[#525d6e]" /></div>
        </div>
      </div>
      <div className="min-w-0 flex-1 pr-[17px] pt-[23px]">
        <Field label="Temperature [K]" w="w-[345px]" v="300" top="" />
        <Field label="Wall Thickness [m]" w="w-[341px]" v="0" top="mt-[7px]" />
        <Field label={<>Heat Generation Rate [W/m<sup className="relative top-0 align-[4px] text-[9px] leading-none">3</sup>]</>} w="w-[319px]" v="0" top="mt-[7px]" />
        <div className="-mr-[9px] mt-[8px] flex justify-end">
          <span className="mt-px h-[17px] w-[17px] shrink-0 border border-[#b0b0b0] bg-white" />
          <span className="w-[118px] shrink-0 whitespace-nowrap pl-[7px] pt-[3px]">Shell Conduction</span>
          <div className="mt-[3px] flex h-[20px] w-[144px] items-center rounded-[4px] border border-[#b8b8b8] bg-[#ebebeb] pl-[2px] pt-[2px]">1 Layer</div>
          <div className="ml-[8px]"><Btn t="Edit..." bold c="w-[44px] border-[#b9b9b9] bg-[#ebebeb] text-[#6e6e6e]" /></div>
        </div>
      </div>
    </div>
    <div className="mt-[13px] flex justify-center gap-[8px]">
      <Btn t="Apply" bold c="w-[53px] border-[#3f4a5a] bg-[#505a6a] text-white" />
      <Btn t="Close" bold c="w-[49px] border-[#4b586a] bg-[#fdfdfd] text-[#4b5668]" />
      <Btn t="Help" bold c="w-[43px] border-[#4b586a] bg-[#fdfdfd] text-[#4b5668]" />
    </div>
  </div>
);

const Combo = ({ v, c }: { v: string; c: string }) => (
  <div className={"flex h-[23px] shrink-0 items-center justify-between rounded-[4px] border pl-[5px] pr-[7px] " + c}><span className="pt-[2px]">{v}</span><Down /></div>
);

const App = () => (
  <div className="relative flex h-[1080px] w-[1920px] flex-col overflow-hidden bg-white text-[12.600px] leading-[16px] [font-family:'DejaVu_Sans_Condensed','DejaVu_Sans',sans-serif]">
    {/* Title bar */}
    <header className="flex h-[29px] shrink-0 items-center">
      <div className="ml-[2px]"><FluentLogo size={20} h={20} /></div>
      <div className="-mt-px ml-[5px] flex-1 whitespace-pre text-[15px] tracking-[-0.285px] text-[#969696] [font-family:'Open_Sans',sans-serif]">A:Fluid Flow (Fluent) Parallel Fluent@DESKTOP-K54HQ00  [3d, dp, pbns, ske, single-process] [CFD Solver - Level 2 - CFD Solver - Level 1]</div>
      <svg width="160" height="28" viewBox="0 0 160 28" fill="none" stroke="#8b8b8b" className="shrink-0">
        <path d="M5 13.500h12M63.500 10.500h8v9h-8zM66 10V8.500h8v9h-2M122 8l12 12M134 8l-12 12" />
      </svg>
    </header>
    {/* Toolbar */}
    <div className="flex h-[45px] shrink-0 items-center border-b-2 border-[#b8b4ad] bg-linear-to-b from-[#f9f9f9] to-[#ededed] pb-px">
      <svg width="203" height="42" viewBox="0 29 203 42" className="shrink-0">
        <path d="M15 46l7-3 8 2v9l-6 5-9-4z" fill="#b0b0b0" stroke="#8a8a8a" /><path d="M15 46l8 3 7-4M23 49v9M15 50l8 3 7-4M18 44l8 3v9M19 47v9" stroke="#808080" fill="none" strokeWidth=".8" />
        <path d="M54 47l6-4 9 3v9l-6 4-9-3z" fill="#c7b48a" stroke="#5f553c" /><path d="M54 47l8 3v8M62 50l7-4" stroke="#5f553c" fill="none" />
        <path d="M60 42v8M57 47l3 4 3-4" stroke="#c44a1c" strokeWidth="2" fill="none" /><path d="M62 53l6 5M69 54v5h-5" stroke="#1c9a1c" strokeWidth="2.400" fill="none" />
        <path d="M93 46l6-3 7 2v12l-6 2-7-3z" fill="#c2c2c2" stroke="#999" /><path d="M100 48h9v11h-9zM102 50h5M102 53h5M102 56h5M103 52v6" stroke="#888" fill="#ddd" />
        <path d="M135 50c1-5 7-6 10-3l1-2v6h-6l2-2c-2-2-4-1-5 1zM145 52c-1 5-7 6-10 3l-1 2v-6h6l-2 2c2 2 4 1 5-1z" fill="#a9a9a9" stroke="#8c8c8c" strokeWidth=".6" />
        <path d="M179 43h6l-3 5h3l-5 5h3l-8 6 2-6h-3l3-4h-3z" fill="#ffe600" stroke="#a88a00" strokeWidth=".8" />
      </svg>
      <WbLogo w={30} />
      <svg width="80" height="42" viewBox="233 29 80 42" className="shrink-0">
        <path d="M249 43h16v3h-16z" fill="#0b67c4" /><path d="M257 49.500h7M262 47l3 2.500-3 2.500M259 56h-7M254 53.500l-3 2.500 3 2.500" stroke="#e01818" strokeWidth="1.300" fill="none" />
        <g fontFamily="Liberation Sans" fontWeight="bold" fontSize="8"><text x="251" y="53" fill="#0b67c4">P</text><text x="260" y="59.500" fill="#0b67c4">P</text><text x="288" y="50.500" fill="#952a12" textLength="12" lengthAdjust="spacingAndGlyphs">MO</text></g>
        <path d="M300 45.500h3M300 49.500h3M290 53.500h13M290 57.500h13" stroke="#1414e8" strokeWidth="2" />
      </svg>
    </div>
    {/* Ribbon tabs */}
    <nav className="flex h-[30px] shrink-0 items-center bg-[#34495f] text-[12.800px] font-bold text-[#d7dde4]">
      <div className="w-[76px] pt-[3px] text-center"><span className="underline">F</span>ile</div>
      <div className="flex h-[30px] w-[120px] items-center justify-center bg-[#fafafa] pt-px text-[#34495f]">Domain</div>
      {["Physics", "User-Defined", "Solution", "Results", "View", "Parallel", "Design"].map((t) => (
        <div key={t} className="w-[120px] pt-[3px] text-center">{t}</div>
      ))}
      <svg width="10" height="6" viewBox="0 0 10 6" className="-mt-[3px] ml-[10px]"><path d="M0 5.500h10L5 0z" fill="#d7dde4" /></svg>
      <div className="ml-auto flex h-[30px] w-[180px] items-center rounded-[4px] bg-[#19222d] pl-[2px] text-[12.600px] font-normal text-[#9aa2ab]">
        <svg width="18" height="18" viewBox="0 0 18 18" fill="none" stroke="#d4dae0"><circle cx="7" cy="7" r="5.500" strokeWidth="2" /><path d="M11 11l5.500 5.500" strokeWidth="2.500" /></svg>
        <span className="pl-[2px] pt-px tracking-[0.060px]">Quick Search (Ctrl+F)</span>
      </div>
      <svg width="20" height="20" viewBox="0 0 20 20" className="-mt-[2px] ml-[33px]"><circle cx="10" cy="10" r="8.500" stroke="#b9c6d4" fill="none" strokeWidth="1.200" /><text x="10" y="14" textAnchor="middle" fontSize="11" fontWeight="bold" fontFamily="DejaVu Sans" fill={G}>?</text></svg>
      <svg width="19" height="19" viewBox="0 0 19 19" className="ml-[18px] mt-[4px]"><path d="M0 0h19v3.500H0zM0 5h3.500v14H0z" fill="#b9c6d4" /><path d="M5.500 5.500h13v3h-13zM5.500 10.500h13v3h-13zM5.500 15.500h13v3h-13z" fill="none" stroke={G} /></svg>
      <div className="ml-[30px] h-[30px] w-[67px] bg-black">
        <svg width="67" height="30" viewBox="0 0 67 30"><path d="M8 23l6-12h4l-6 12z" fill="#ffb71b" /><path d="M15.500 14l2-3 5 12h-3.500z" fill="#fff" /><text x="22" y="23" fontSize="16.500" fontWeight="bold" fontFamily="Lato" fill="#fff" textLength="38" lengthAdjust="spacingAndGlyphs">nsys</text></svg>
      </div>
    </nav>
    {/* Ribbon */}
    <div className="flex h-[114px] shrink-0 bg-[#fafafa] pt-[4px]">
      <div className="ml-[5px] h-[106px] w-px bg-[#454e5c]" />
      <Group title="Mesh" w="w-[378px]">
        <div className="ml-[13px] w-[77px]"><R n="display" t="Display..." /><R n="info" t="Info" arrow /><R n="units" t="Units..." /></div>
        <BigMesh kind="check" label="Check" cls="ml-[9px] w-[56px]" />
        <BigMesh kind="star" label="Quality" cls="ml-[17px] w-[56px]" />
        <div className="ml-[23px] w-[115px]"><R n="scale" t="Scale..." /><R n="transform" t="Transform" arrow /><R n="poly" t="Make Polyhedra" /></div>
      </Group>
      <Group title="Zones" w="w-[364px]">
        <div className="ml-[14px] w-[94px]"><R n="combine" t="Combine" arrow /><R n="separate" t="Separate" arrow /><R n="adjacency" t="Adjacency..." /></div>
        <div className="ml-[15px] w-[100px]"><R n="del" t="Delete..." /><R n="deact" t="Deactivate..." /><R n="act" t="Activate..." /></div>
        <div className="ml-[12px] w-[117px]"><R n="append" t="Append" arrow /><R n="repmesh" t="Replace Mesh..." /><R n="repzone" t="Replace Zone..." /></div>
      </Group>
      <Group title="Interfaces" w="w-[107px]"><div className="ml-[13px]"><R n="imesh" t="Mesh..." /><R n="overset" t="Overset..." dim /></div></Group>
      <Group title="Mesh Models" w="w-[145px]"><div className="ml-[14px]"><R n="dynmesh" t="Dynamic Mesh..." /><R n="mixing" t="Mixing Planes..." /><R n="gap" t="Gap Model..." /></div></Group>
      <Group title="Turbo Model" w="w-[150px]">
        <div className="ml-[14px]">
          <div className="-ml-[4px] flex h-[29px] items-center text-[#555]"><span className="mr-[7px] h-[17px] w-[17px] border border-[#b5b5b5] bg-white" />Enable</div>
          <R n="turbo" t="Turbo Topology..." /><R n="turboc" t="Turbo Create..." dim />
        </div>
      </Group>
      <Group title="Adapt" w="w-[220px]">
        <div className="ml-[13px] w-[100px]"><R n="adapt" t="Manual..." /><R n="controls" t="Controls..." /></div>
        <div><R n="adaptauto" t="Automatic..." /><R n="manage" t="Manage..." /></div>
      </Group>
      <Group title="Surface" w="w-[108px]"><div className="ml-[13px] w-[84px]"><R n="plus" t="Create" arrow /><R n="manage" t="Manage..." /></div></Group>
    </div>

    <div className="flex h-[812px] shrink-0 pt-[3px]">
      {/* Outline */}
      <aside className="flex w-[266px] shrink-0 flex-col bg-[#eceef0]">
        <div className="flex h-[37px] items-start pl-[9px] pr-[4px] pt-[6px]">
          <span className="flex-1 text-[12.500px] font-bold text-[#62738a]">Outline View</span>
          <svg width="8" height="10" viewBox="0 0 8 10" className="mt-px"><path d="M6.500 1L1.500 5l5 4" fill="none" stroke="#222" strokeWidth="1.500" /></svg>
        </div>
        <div className="mx-[7px] flex h-[31px] shrink-0 items-center rounded-full bg-[#f9f9f9] pl-[16px] pt-[2px] tracking-[0.100px] text-[#7a7a7a]">Filter Text</div>
        <div className="mt-[9px] flex h-[717px] shrink-0">
          <div className="flex w-[246px] flex-col overflow-hidden pt-px">{tree.map((r) => <TreeRow key={r.t} r={r} />)}</div>
          <div className="flex w-[15px] flex-col bg-[#c2cad0]">
            <div className="flex h-[20px] items-center justify-center bg-[#9dadb6]"><ScrollTri d="M1 7h8L5 2.500z" /></div>
            <div className="mt-[118px] h-[485px] bg-[#5b6070]" />
            <div className="mt-auto flex h-[20px] items-center justify-center bg-[#9dadb6]"><ScrollTri d="M1 3h8L5 7.500z" /></div>
          </div>
        </div>
        <div className="ml-[5px] flex h-[15px] w-[241px] bg-[#c2cad0]">
          <div className="flex w-[20px] items-center justify-center bg-[#9dadb6]"><ScrollTri d="M7 1v8L2.500 5z" /></div>
          <div className="w-[140px] bg-[#5b6070]" />
          <div className="ml-auto flex w-[20px] items-center justify-center bg-[#9dadb6]"><ScrollTri d="M3 1v8L7.500 5z" /></div>
        </div>
      </aside>
      {/* Task page */}
      <main className="ml-[3px] flex w-[406px] shrink-0 flex-col border border-[#b5b8bc] bg-[#f3f3f3] text-[#14171c]">
        <div className="h-[26px] shrink-0 border-b border-[#b0b5bc] bg-[#bfc4cb] pl-[8px] pt-[5px] text-[12.700px] font-bold text-[#62738a]">Task Page</div>
        <div className="ml-[11px] mt-[23px] font-bold text-black">Boundary Conditions</div>
        <div className="ml-[11px] mt-[24px] flex h-[24px] items-center">
          <span className="w-[35px]">Zone</span>
          <div className="flex h-[20px] w-[262px] shrink-0 items-center rounded-[4px] border border-[#b3bfcf] bg-[#fefefe] pl-[3px] text-[#8a8a8a]">Filter Text</div>
          <div className="ml-[9px] h-[24px] w-[40px] rounded-[4px] border border-[#4b586a]" />
        </div>
        <div className="ml-[11px] mt-[5px] h-[445px] w-[380px] shrink-0 rounded-[3px] border-2 border-[#dedede] bg-white">
          {["computers", "desks", "inlet", "interior-solid", "oulet", "wall-solid"].map((t) => (
            <div key={t} className={"h-[17px] pl-[3px] pt-px tracking-[0.250px] " + (t === "desks" ? "bg-[#8fa4b9]" : "")}>{t}</div>
          ))}
        </div>
        <div className="ml-[11px] mt-[7px] flex h-[45px] shrink-0">
          <div className="w-[82px] text-[#8a8a8a]"><div className="h-[19px] pt-[2px]">Phase</div><Combo v="mixture" c="w-[75px] border-[#b9b9b9] bg-[#ebebeb]" /></div>
          <div className="w-[151px]"><div className="h-[19px] pt-[2px]">Type</div><Combo v="wall" c="w-[144px] border-[#b3bfcf] bg-[#fdfdfd]" /></div>
          <div><div className="h-[20px] pt-px">ID</div><div className="h-[23px] w-[90px] rounded-[4px] border border-[#b3bfcf] bg-[#fdfdfd] pl-[7px] pt-[4px]">7</div></div>
        </div>
        <div className="ml-[19px] mt-[9px] flex">
          <div className="flex w-[94px] flex-col gap-[4px]">
            <div className="[&>div]:pr-[5px]"><Btn t="Edit..." c={normal} /></div><Btn t="Parameters..." c={normal} /><Btn t="Display Mesh..." c={normal} />
          </div>
          <div className="ml-[17px] flex flex-col">
            <div className="ml-[6px] flex gap-[4px]"><Btn t="Copy..." c={"w-[54px] pr-[5px] " + normal} /><Btn t="Profiles..." c={"w-[69px] pr-[5px] " + normal} /></div>
            <div className="mt-[17px] w-[139px]"><Btn t="Operating Conditions..." c={normal} /></div>
            <div className="mt-[11px] w-[136px]"><Btn t="Periodic Conditions..." c="border-[#c3c6ca] bg-[#d8dadd] text-[#868686]" /></div>
            <div className="mt-[11px] w-[119px]"><Btn t="Perforated Walls..." c={"pr-[5px] " + normal} /></div>
          </div>
        </div>
      </main>
      {/* Graphics and console */}
      <div className="ml-[3px] flex flex-1 flex-col">
        <div className="flex h-[599px] shrink-0">
          <div className="flex w-[51px] flex-col items-center"><Dots c="mt-[5px]" /><div className="mb-[27px] mt-auto h-[34px] w-[33px] rounded-[4px] border border-[#94a3b3]" /></div>
          <Viewport />
          <div className="flex w-[47px] flex-col items-center pr-px">
            <Dots c="mt-[5px] mb-[6px]" />
            <div className="flex flex-col gap-[5px]">
              <Tool><ellipse cx="14.500" cy="8" rx="10" ry="5" fill={G} stroke="#8f8f8f" /><path d="M1 15h27" stroke="#777" /><ellipse cx="14.500" cy="22" rx="10" ry="5" fill="#ecd096" /></Tool>
              <Tool><path d="M13 22c-1-8 6-15 13-14 3 5-5 14-13 14z" fill="#5c5c5c" /><ellipse cx="9.500" cy="14" rx="6.500" ry="11" fill={G} stroke="#777" /></Tool>
              <Tool><path d="M0 6l24 23M0 14l15 15M0 22l7 7M4 0l25 24M12 0l17 16M20 0l9 8M29 6L5 29M29 14L14 29M29 22l-7 7M25 0L0 24M17 0L0 16M9 0L0 8" stroke="#9b9b9b" /><ellipse cx="14.500" cy="14.500" rx="6.500" ry="11" fill={G} stroke="#777" /></Tool>
            </div>
            <Dots c="mt-[11px] mb-[6px]" />
            <div className="flex flex-col gap-[5px]">
              <Tool><path d="M3.500 15.500c6-8 16-8 22 0-6 7-16 7-22 0zM14.500 4v4M5 6l3 4M24 6l-3 4" stroke={K} strokeWidth="1.500" /><circle cx="14.500" cy="15" r="3.500" fill={G} /></Tool>
              <Tool><path d="M3.500 15.500c6-8 16-8 22 0-6 7-16 7-22 0zM14.500 4v4M5 6l3 4" stroke={K} strokeWidth="1.500" /><circle cx="14.500" cy="15" r="3.500" stroke={K} strokeWidth="1.500" /><path d="M6 24L24 8" stroke={G} strokeWidth="2" /></Tool>
              <Tool><path d="M4 5.500h21v19h-9M4 5.500V10" stroke={G} strokeWidth="1.500" strokeDasharray="2 1.500" /><path d="M3 15c8-2 13 2 13 9M6 12l-4 3 4 3" stroke={K} strokeWidth="1.500" /></Tool>
            </div>
            <Dots c="mt-[11px] mb-[6px]" />
            <div className="flex flex-col gap-[5px]">
              <Tool><path d="M6 7v16h17M7 22l11-9" stroke={K} strokeWidth="1.500" /><path d="M3 8l3-5 3 5zM22 20l5 3-5 3zM15 11l6-1-2 5z" fill={G} /></Tool>
              <Tool><rect x="1.500" y="12" width="26" height="5" rx="2.500" stroke="#555" strokeWidth="1.300" fill="#fff" /><path d="M3 12.500h12v4H3z" fill={G} /></Tool>
              <Tool><path d="M4 4h17l4 4v17H4z" stroke={K} strokeWidth="1.600" /><path d="M8 9.500h12" stroke={G} strokeWidth="2.200" /><path d="M8 14.500h7M8 17.500h7M8 20.500h7" stroke={K} strokeWidth="1.300" /></Tool>
              <Tool gray><path d="M3 7h6v15H3z" fill="#8a8a8a" /><path d="M9 9l4-2v13l-4 2z" stroke={G} fill="#f0deb4" /><path d="M17 12h10M19 9.500L16.500 12l2.500 2.500M17 17h10M19 14.500L16.500 17l2.500 2.500" stroke="#8a8a8a" strokeWidth="1.400" /></Tool>
            </div>
            <Dots c="mt-[11px] mb-[6px]" />
            <div className="flex flex-col gap-[5px]">
              <Tool><path d="M8 19V7h12" stroke={K} strokeWidth="2.200" /><path d="M11.500 10.500h10v12h-10z" stroke={G} strokeWidth="1.300" /></Tool>
              <Tool><path d="M6 8.500h5l1-2h5l1 2h5.500v12H6z" stroke={G} strokeWidth="1.300" /><circle cx="14.500" cy="14.500" r="3" fill={K} /></Tool>
            </div>
          </div>
        </div>
        <div className="flex h-[36px] shrink-0 items-center pl-[6px] pr-[4px]">
          <svg width="5" height="18" viewBox="0 0 5 18"><path d="M1 0v18M4 0v18" stroke="#aaa" strokeWidth="1.200" strokeDasharray="1.200 1.800" /></svg>
          <span className="ml-auto pr-[2px] text-[#14171c]">0 selected</span>
          <Combo v="all" c="w-[168px] border-[#b3bfcf] bg-[#fdfdfd] text-[#14171c]" />
        </div>
        <div className="flex h-[27px] shrink-0 items-center bg-[#bfc4cb] pl-[9px] text-[12.500px] font-bold text-[#62738a]">
          <span className="flex-1">Console</span>
          <svg width="30" height="14" viewBox="0 0 30 14" fill="none" stroke="#555"><rect x="3.500" y="2" width="10.500" height="10" rx="1.500" /><path d="M6 6.500h4v3.500H6zM8 6V4.500h4V8h-2" /><path d="M25 3l-4 4 4 4" stroke="#222" strokeWidth="1.500" /></svg>
        </div>
        <div className="flex h-[141px] shrink-0 border-l border-[#b3bfcf] bg-[#f7f7f7]">
          <pre className="-mt-[2px] w-[1154px] overflow-hidden pl-[4px] text-[13.200px] leading-[16px] tracking-[0.080px] text-[#111] [font-family:'Liberation_Mono',monospace]">{`Setting desks (mixture) ... Done.
Setting inlet (mixture) ... Done.

     parallel,
Done.

Preparing mesh for display...
Done.`}</pre>
          <div className="flex flex-1 gap-[5px]">
            <div className="-mt-px flex h-[27px] w-[33px] items-center justify-center rounded-[3px] border border-[#b5b5b5] bg-[#fbfbfb]"><svg width="19" height="19" viewBox="0 0 19 19" fill="none"><path d="M9.500 1.500L18 17H1z" stroke={G} strokeWidth="1.300" /><path d="M9.500 7v5M9.500 13.500v1.500" stroke="#555" strokeWidth="1.800" /></svg></div>
            <div className="-mt-px flex h-[27px] w-[33px] items-center justify-center rounded-[3px] border border-[#b5b5b5] bg-[#fbfbfb]"><svg width="19" height="19" viewBox="0 0 19 19" fill="none"><circle cx="9.500" cy="9.500" r="8.500" stroke="#333" strokeWidth="1.200" /><path d="M9.500 5v6M9.500 12.500v2" stroke={G} strokeWidth="1.600" /></svg></div>
          </div>
          <div className="w-[16px] bg-white">
            <div className="flex h-[126px] w-[15px] flex-col bg-[#c2cad0]">
              <div className="flex h-[20px] items-center justify-center bg-[#9dadb6]"><ScrollTri d="M1 7h8L5 2.500z" /></div>
              <div className="mt-auto h-[20px] bg-[#5b6070]" />
              <div className="flex h-[20px] items-center justify-center bg-[#9dadb6]"><ScrollTri d="M1 3h8L5 7.500z" /></div>
            </div>
            <svg width="15" height="14" viewBox="0 0 15 14"><path d="M2.500 0v14" stroke="#aaa" /><path d="M6 7l3 4 5-9" stroke="#111" strokeWidth="2.600" fill="none" /></svg>
          </div>
        </div>
        <div className="h-[6px] bg-[#bfc6cc]" />
      </div>
    </div>

    {/* Taskbar */}
    <footer className="flex h-[50px] shrink-0 bg-[#101010] text-white [font-family:'Open_Sans',sans-serif]">
      <div className="flex w-[60px] items-center justify-center"><svg width="20" height="20" viewBox="0 0 20 20" fill="#fff"><path d="M0 3l8.500-1.200V9.500H0zM9.500 1.600L20 0v9.500H9.500zM0 10.500h8.500v7.700L0 17zM9.500 10.500H20V20L9.500 18.400z" /></svg></div>
      <div className="flex w-[430px] items-center border border-[#c4c4c4] bg-[#f3f3f3] pl-[13px] text-[17.800px] text-[#333]">
        <svg width="22" height="22" viewBox="0 0 22 22" fill="none" stroke="#222" strokeWidth="1.400"><circle cx="14" cy="8" r="6.500" /><path d="M9.500 12.500L1 21" /></svg>
        <span className="pl-[14px] tracking-[0.020px]">Type here to search</span>
      </div>
      <div className="flex w-[60px] items-center justify-center"><svg width="22" height="22" viewBox="0 0 22 22"><circle cx="11" cy="11" r="8.500" fill="none" stroke="#fff" strokeWidth="2.400" /></svg></div>
      <div className="flex w-[60px] items-center justify-center"><svg width="22" height="20" viewBox="0 0 22 20" fill="none" stroke="#fff" strokeWidth="1.200"><path d="M1 0v3.500h12V0M1 6h12v8H1zM1 20v-3.500h12V20M19 0v5M19 12v8" /><path d="M17.500 6.500h3v3h-3z" fill="#fff" stroke="none" /></svg></div>
      <div className="flex w-[68px] flex-col items-center justify-between pt-[11px]">
        <svg width="30" height="26" viewBox="0 0 30 26"><path d="M1 2h11l3 3h13v18H1z" fill="#ffd667" /><path d="M1 2h11l2 3-1 2H1z" fill="#e39b00" /><path d="M6 24V15c0-1 1-2 2-2h13c1 0 2 1 2 2v9h-5v-5h-7v5z" fill="#3a92dc" /></svg>
        <div className="h-[3px] w-[51px] bg-[#76b9ed]" />
      </div>
      <div className="flex w-[56px] items-center justify-center">
        <svg width="30" height="30" viewBox="0 0 30 30"><defs><linearGradient id="eg" x1="0" y1="0" x2="1" y2=".5"><stop offset="0" stopColor="#2aa5dc" /><stop offset=".5" stopColor="#35c1c4" /><stop offset="1" stopColor="#66d84a" /></linearGradient></defs>
          <circle cx="15" cy="15" r="14.500" fill="#0d6cc4" /><path d="M.7 14C2 5 9 .5 15 .5c9 0 14.500 7 14.500 12.500 0 5-4 8-9 7-3-.6-2-2-1.500-4C20 11 13 8 8 10c-4 1-6 3-7.300 4z" fill="url(#eg)" /><path d="M8 12c-2 8 5 17 19 11-3 5-9 7-13 6.500C9 29 5 22 8 12z" fill="#114a8b" /><path d="M12 16c1-3 3-4 6-3 1 1 1 2 .5 3.500-.5 2 1 3.500 3 4 3 .6 6-.5 7.500-1.500l-1.500 4c-3 1.200-6 1.200-8 .7-5-1-7.500-4-7.500-7.700z" fill="#101010" />
        </svg>
      </div>
      <div className="flex w-[66px] items-center justify-center"><svg width="30" height="30" viewBox="0 0 30 30"><path d="M1 8h28v19a2 2 0 0 1-2 2H3a2 2 0 0 1-2-2z" fill="#f2f2f2" /><path d="M8 8V2.500C8 1.500 8.500 1 9.500 1h11c1 0 1.500.5 1.500 1.500V8" fill="none" stroke="#ddd" strokeWidth="2.400" /><path d="M9.500 14h5v5h-5z" fill="#f25022" /><path d="M15.500 14h5v5h-5z" fill="#7fba00" /><path d="M9.500 20h5v5h-5z" fill="#00a4ef" /><path d="M15.500 20h5v5h-5z" fill="#ffb900" /></svg></div>
      <div className="flex w-[60px] items-center justify-center"><svg width="30" height="28" viewBox="0 0 30 28"><path d="M0 9L15 0l15 9v19H0z" fill="#0f62b5" /><path d="M3 9h24v10H3z" fill="#f5f5f5" /><path d="M0 9l15 10L30 9v19H0z" fill="#2ca5ec" /><path d="M0 28l15-10 15-9v19z" fill="#45bdf5" opacity=".7" /></svg></div>
      <div className="flex w-[63px] items-center justify-center"><svg width="30" height="30" viewBox="0 0 30 30"><rect width="30" height="30" rx="3" fill="#2b2b2b" /><rect x="4" width="22" height="30" fill="#1d1d1d" /><path d="M7.500 23V8.500L22 21.500V7" fill="none" stroke="#8a8a8a" strokeWidth="2.200" /></svg></div>
      <div className="flex w-[63px] flex-col items-center justify-between pt-[10px]"><WbLogo w={30} /><div className="h-[3px] w-[51px] bg-[#76b9ed]" /></div>
      <div className="flex w-[61px] flex-col items-center justify-between bg-[#333] pt-[10px]"><FluentLogo size={30} /><div className="h-[3px] w-[61px] bg-[#76b9ed]" /></div>
      <div className="ml-auto flex items-center">
        <svg width="16" height="9" viewBox="0 0 16 9"><path d="M1 8l7-7 7 7" fill="none" stroke="#fff" strokeWidth="1.400" /></svg>
        <svg width="20" height="20" viewBox="0 0 20 20" className="ml-[11px]"><circle cx="11" cy="7" r="5.500" fill="#9a9a9a" /><circle cx="5" cy="10" r="4.500" fill="#e4e4e4" /><path d="M5 8h10v6.500H5z" fill="#ccc" /><circle cx="14.500" cy="13.500" r="5.200" fill="#fff" /><circle cx="14.500" cy="13.500" r="4.300" fill="#1a73c9" /><path d="M12 13c1-3 4-3 5-1M17 14c-1 3-4 3-5 1" stroke="#fff" fill="none" /></svg>
        <svg width="22" height="22" viewBox="0 0 22 22" fill="none" stroke="#fff" strokeWidth="1.200" className="ml-[9px]"><circle cx="10.500" cy="10" r="9" /><ellipse cx="10.500" cy="10" rx="4" ry="9" /><path d="M2 7h17M2 13h12M10.500 1v18" /><circle cx="16.500" cy="15.500" r="4" fill="#101010" /><path d="M14 13l5 5" /></svg>
        <svg width="20" height="16" viewBox="0 0 20 16" fill="none" stroke="#fff" strokeWidth="1.300" className="ml-[8px]"><path d="M5 4h13v9H6v-3" /><path d="M7 6h9v5H8z" fill="#fff" /><path d="M19.500 7v3M1 1v3h4V1M3 4v5h3" /></svg>
        <svg width="22" height="18" viewBox="0 0 22 18" fill="none" stroke="#fff" strokeWidth="1.200" className="ml-[9px]"><path d="M1 6h3l4-4v14l-4-4H1zM11 6c1.500 2 1.500 4 0 6M14 4c2.500 3.500 2.500 6.500 0 10" /><path d="M17 2c3.500 4 3.500 10 0 14" stroke="#777" /></svg>
        <span className="ml-[13px] w-[30px] text-[14px]">ENG</span>
        <div className="ml-[12px] w-[86px] text-center text-[14px] leading-[23px]"><div>14:10</div><div>15-04-2022</div></div>
        <svg width="32" height="34" viewBox="0 0 32 34" className="ml-[15px] mt-[12px]"><path d="M1 1h20v17H9l-4 4v-4H1z" fill="#fff" /><path d="M5 5.500h12M5 9.500h12M5 13.500h8" stroke="#111" strokeWidth="1.200" /><circle cx="20.500" cy="21" r="10" fill="#2b2b2b" stroke="#888" /><text x="20.500" y="26" fontSize="13" fontFamily="Open Sans" fontWeight="bold" textAnchor="middle" fill="#fff">1</text></svg>
        <div className="ml-[14px] mr-[5px] h-[50px] w-px bg-[#555]" />
      </div>
    </footer>
    <Dialog />
  </div>
);

export default App;
